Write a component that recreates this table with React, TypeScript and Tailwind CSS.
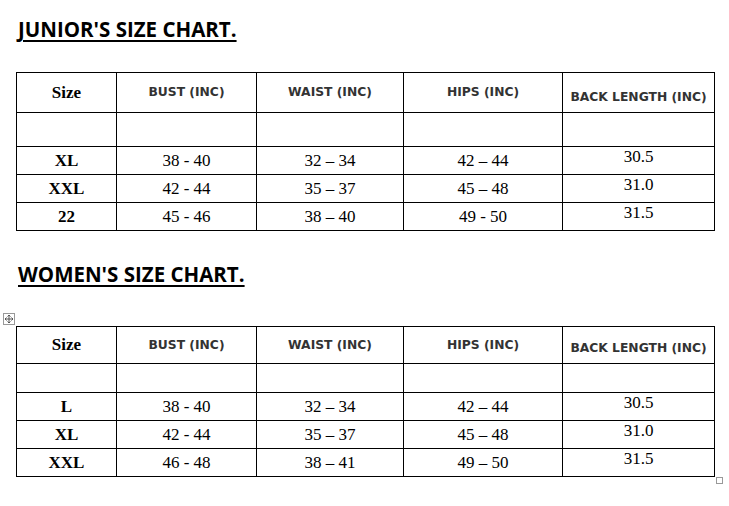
import React from "react";

type Row = { size: string; bust: string; waist: string; hips: string; back: string };

const junior: Row[] = [
  { size: "XL", bust: "38 - 40", waist: "32 – 34", hips: "42 – 44", back: "30.5" },
  { size: "XXL", bust: "42 - 44", waist: "35 – 37", hips: "45 – 48", back: "31.0" },
  { size: "22", bust: "45 - 46", waist: "38 – 40", hips: "49 - 50", back: "31.5" },
];

const women: Row[] = [
  { size: "L", bust: "38 - 40", waist: "32 – 34", hips: "42 – 44", back: "30.5" },
  { size: "XL", bust: "42 - 44", waist: "35 – 37", hips: "45 – 48", back: "31.0" },
  { size: "XXL", bust: "46 - 48", waist: "38 – 41", hips: "49 – 50", back: "31.5" },
];

const cell = "border border-black p-0 text-center";
const head = "font-['DejaVu_Sans',sans-serif] text-[12.3px] font-bold text-[#333]";
const serif = "font-['Liberation_Serif',serif] text-[17px] text-black";

const SizeTable = ({ rows, headH, blankH }: { rows: Row[]; headH: string; blankH: string }) => (
  <table className="table-fixed border-collapse w-[699px]">
    <colgroup>
      <col className="w-[100px]" />
      <col className="w-[140px]" />
      <col className="w-[147px]" />
      <col className="w-[159px]" />
      <col className="w-[152px]" />
    </colgroup>
    <tbody>
      <tr className={headH}>
        <td className={`${cell} ${serif} font-bold`}>Size</td>
        <td className={`${cell} ${head}`}>BUST (INC)</td>
        <td className={`${cell} ${head}`}>WAIST (INC)</td>
        <td className={`${cell} ${head}`}>HIPS (INC)</td>
        <td className={`${cell} ${head} align-bottom pb-[6px]`}>BACK LENGTH (INC)</td>
      </tr>
      <tr className={blankH}>
        <td className={cell}></td>
        <td className={cell}></td>
        <td className={cell}></td>
        <td className={cell}></td>
        <td className={cell}></td>
      </tr>
      {rows.map((r) => (
        <tr key={r.size} className="h-[28px]">
          <td className={`${cell} ${serif} font-bold`}>{r.size}</td>
          <td className={`${cell} ${serif}`}>{r.bust}</td>
          <td className={`${cell} ${serif}`}>{r.waist}</td>
          <td className={`${cell} ${serif}`}>{r.hips}</td>
          <td className={`${cell} ${serif} align-top leading-[20px]`}>{r.back}</td>
        </tr>
      ))}
    </tbody>
  </table>
);

const Title = ({ children }: { children: React.ReactNode }) => (
  <h2 className="ml-[18px] font-['Open_Sans',sans-serif] text-[20.5px] font-bold leading-[24px] text-black underline decoration-[2px] underline-offset-[3px]">
    {children}
  </h2>
);

export default function App() {
  return (
    <div className="w-[729px] h-[506px] bg-white relative overflow-hidden">
      <div className="pt-[17px]">
        <Title>JUNIOR'S SIZE CHART.</Title>
      </div>
      <div className="mt-[31px] ml-[16px]">
        <SizeTable rows={junior} headH="h-[40px]" blankH="h-[34px]" />
      </div>
      <div className="mt-[31px]">
        <Title>WOMEN'S SIZE CHART.</Title>
      </div>
      <div className="mt-[40px] ml-[16px] relative">
        <div className="absolute -left-[13px] -top-[13px] w-[12px] h-[12px] border border-[#999] bg-white flex items-center justify-center">
          <svg width="10" height="10" viewBox="0 0 10 10" fill="none" stroke="#555" strokeWidth="1">
            <path d="M5 1v8M1 5h8" />
            <path d="M3.5 2.5L5 1l1.5 1.5M3.5 7.5L5 9l1.5-1.5M2.5 3.5L1 5l1.5 1.5M7.5 3.5L9 5l-1.5 1.5" />
          </svg>
        </div>
        <SizeTable rows={women} headH="h-[37px]" blankH="h-[29px]" />
        <div className="absolute left-[700px] -bottom-[7px] w-[7px] h-[7px] border border-[#999] bg-white" />
      </div>
    </div>
  );
}
